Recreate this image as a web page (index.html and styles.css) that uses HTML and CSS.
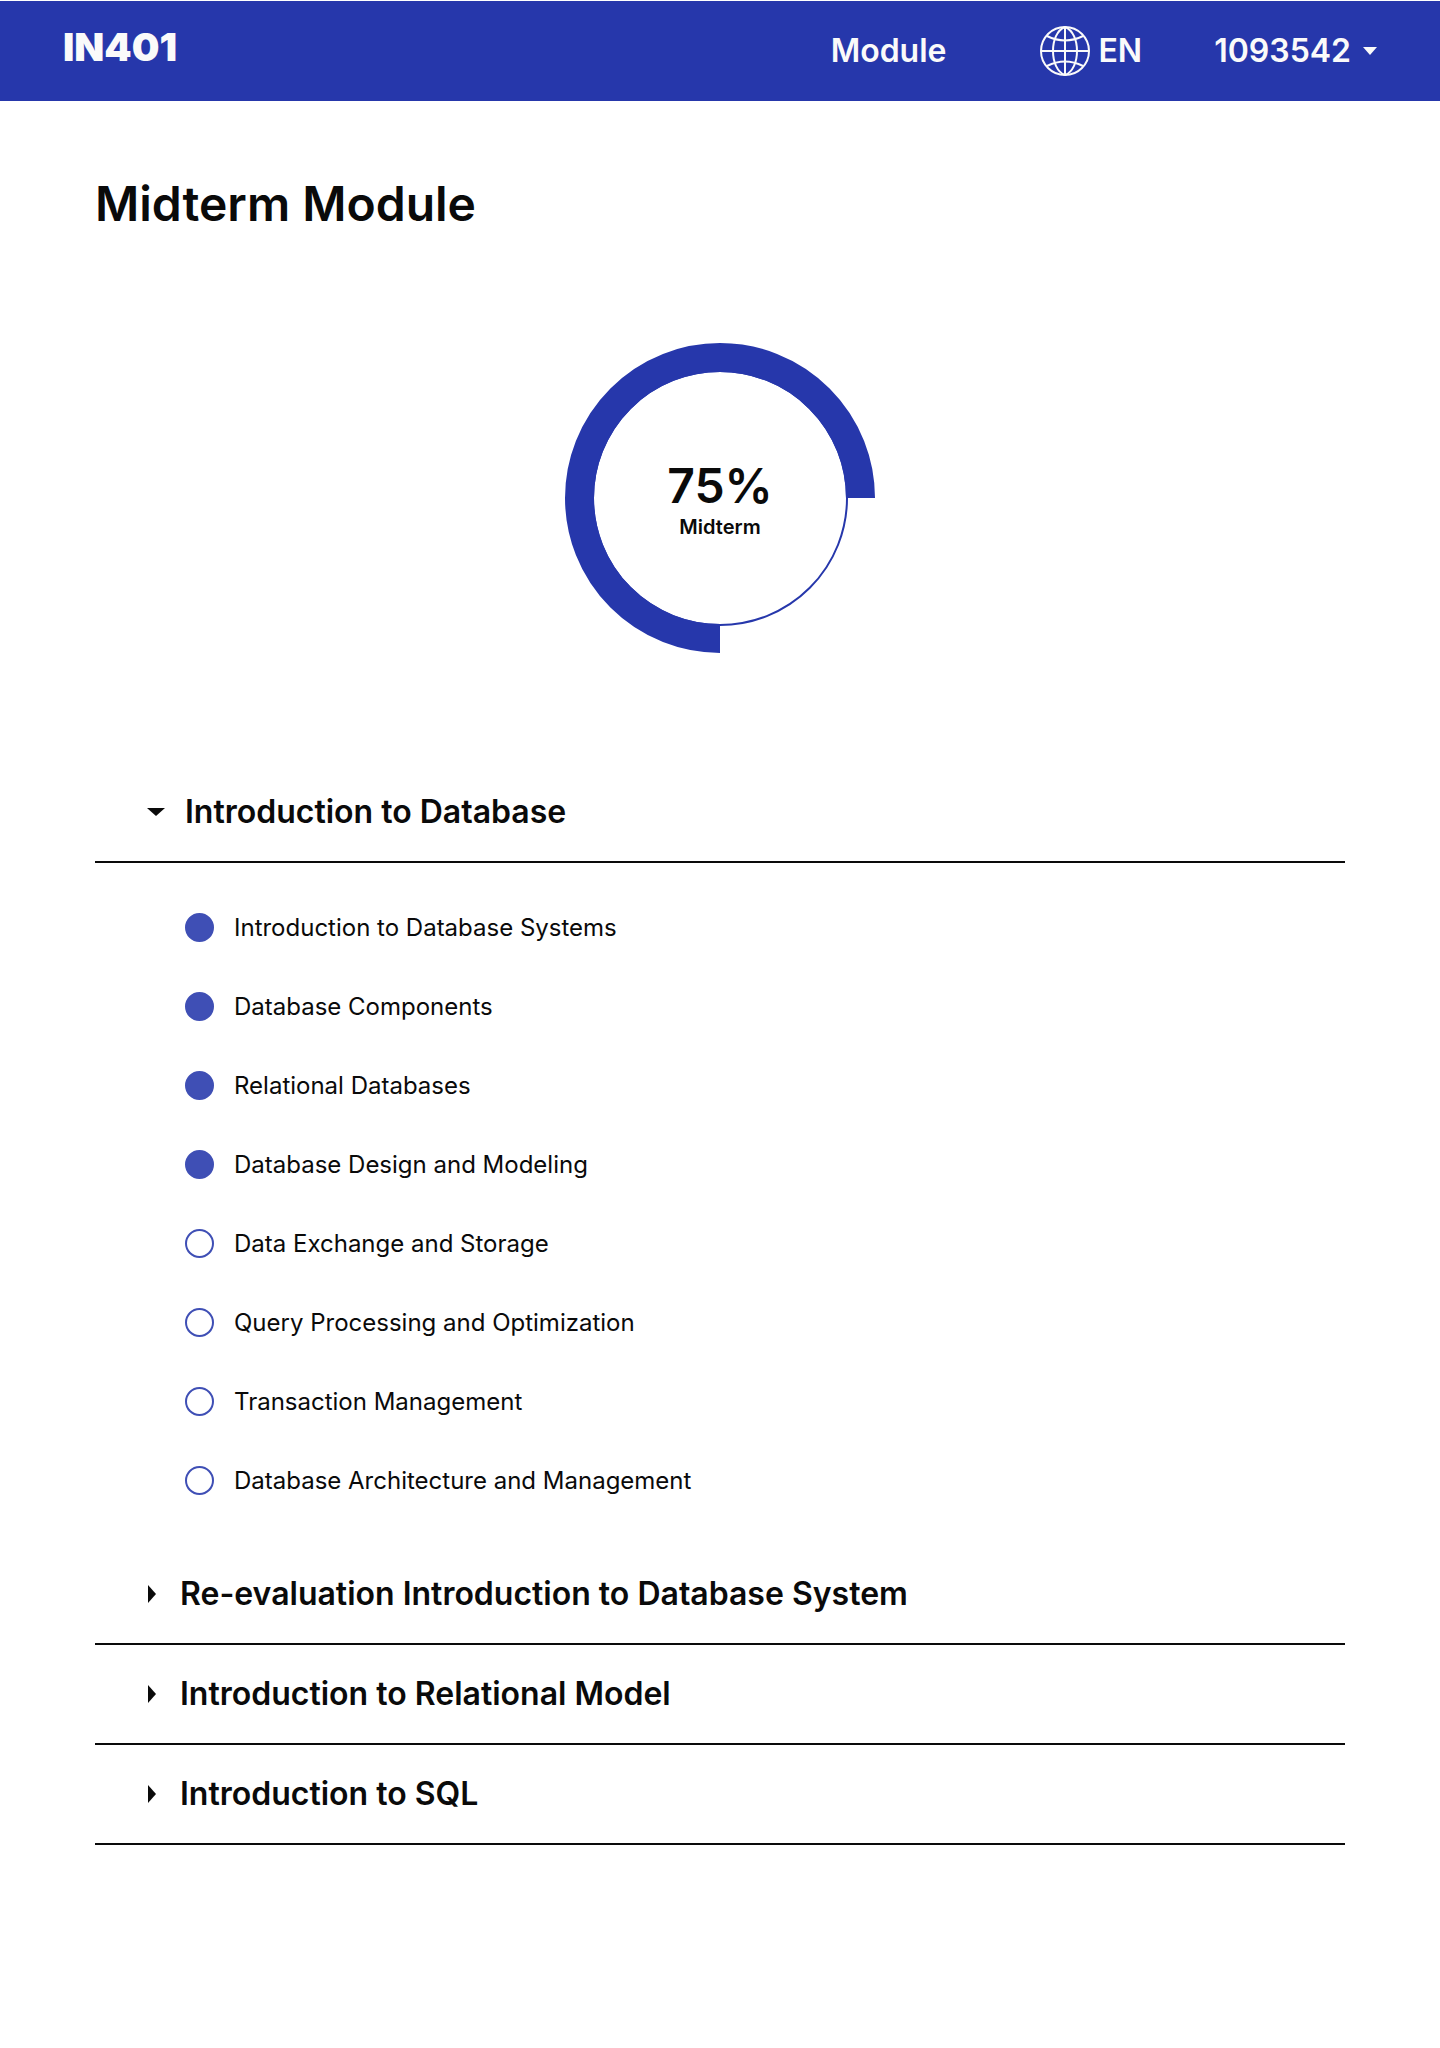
FILE: index.html
```html
<!DOCTYPE html>
<html lang="en">
<head>
<meta charset="utf-8">
<meta name="viewport" content="width=device-width, initial-scale=1">
<title>IN401 – Midterm Module</title>
<link rel="stylesheet" href="styles.css">
</head>
<body>
<header class="topbar">
  <a class="logo" href="#">IN401</a>
  <nav class="nav">
    <a class="nav-link" href="#">Module</a>
    <button class="lang" type="button">
      <svg class="globe" viewBox="0 0 50 50" aria-hidden="true">
        <circle cx="25" cy="25" r="24"/>
        <path d="M25 1v48M1 25h48"/>
        <path d="M25 1C9 7 9 43 25 49M25 1C41 7 41 43 25 49"/>
        <path d="M7 10Q25 19 43 10M7 40Q25 31 43 40"/>
      </svg>
      EN
    </button>
    <button class="account" type="button">
      1093542
      <svg class="account-caret" viewBox="0 0 14 8" aria-hidden="true"><path d="M0 0h14L7 8z"/></svg>
    </button>
  </nav>
</header>
<main class="page">
  <h1 class="title">Midterm Module</h1>
  <div class="progress">
    <svg class="ring" viewBox="0 0 620 620" aria-hidden="true">
      <circle class="ring-track" cx="310" cy="310" r="254"/>
      <path class="ring-value" d="M310 591A281 281 0 1 1 591 310"/>
    </svg>
    <p class="progress-text"><span class="percent">75%</span><span class="caption">Midterm</span></p>
  </div>
  <details class="section" open>
    <summary class="heading"><svg class="caret caret-open" viewBox="0 0 18 8" aria-hidden="true"><path d="M0 0h18L9 8z"/></svg>Introduction to Database</summary>
    <ul class="lessons">
      <li><label class="lesson"><input class="mark" type="checkbox" checked>Introduction to Database Systems</label></li>
      <li><label class="lesson"><input class="mark" type="checkbox" checked>Database Components</label></li>
      <li><label class="lesson"><input class="mark" type="checkbox" checked>Relational Databases</label></li>
      <li><label class="lesson"><input class="mark" type="checkbox" checked>Database Design and Modeling</label></li>
      <li><label class="lesson"><input class="mark" type="checkbox">Data Exchange and Storage</label></li>
      <li><label class="lesson"><input class="mark" type="checkbox">Query Processing and Optimization</label></li>
      <li><label class="lesson"><input class="mark" type="checkbox">Transaction Management</label></li>
      <li><label class="lesson"><input class="mark" type="checkbox">Database Architecture and Management</label></li>
    </ul>
  </details>
  <details class="section">
    <summary class="heading"><svg class="caret" viewBox="0 0 13 18" aria-hidden="true"><path d="M1 0l8 9-8 9z"/></svg>Re-evaluation Introduction to Database System</summary>
  </details>
  <details class="section">
    <summary class="heading"><svg class="caret" viewBox="0 0 13 18" aria-hidden="true"><path d="M1 0l8 9-8 9z"/></svg>Introduction to Relational Model</summary>
  </details>
  <details class="section">
    <summary class="heading"><svg class="caret" viewBox="0 0 13 18" aria-hidden="true"><path d="M1 0l8 9-8 9z"/></svg>Introduction to SQL</summary>
  </details>
</main>
</body>
</html>
```
FILE: styles.css
```css
* {
  box-sizing: border-box;
}

body {
  margin: 0;
  padding-top: 1px;
  background: #fff;
  color: #0a0a0a;
  font-family: Inter, "Liberation Sans", sans-serif;
}

button {
  padding: 0;
  border: 0;
  background: none;
  color: inherit;
  font: inherit;
  cursor: pointer;
}

a {
  color: inherit;
  text-decoration: none;
}

.topbar {
  display: flex;
  align-items: center;
  justify-content: space-between;
  min-height: 100px;
  padding: 0 63px;
  background: #2637ab;
  color: #fafafa;
}

.logo {
  padding-bottom: 8px;
  font-size: 39px;
  font-weight: 900;
  line-height: 48px;
}

.nav {
  display: flex;
  align-items: center;
  font-size: 32px;
  font-weight: 600;
  line-height: 42px;
}

.lang {
  display: flex;
  align-items: center;
  gap: 8px;
  margin: 0 72px 0 94px;
}

.globe {
  width: 50px;
  height: 50px;
  fill: none;
  stroke: currentColor;
  stroke-width: 2;
}

.account {
  display: flex;
  align-items: center;
  gap: 12px;
}

.account-caret {
  width: 14px;
  height: 8px;
  fill: currentColor;
}

.page {
  padding: 72px 95px 80px;
}

.title {
  margin: 0;
  font-size: 48px;
  font-weight: 600;
  line-height: 62px;
}

.progress {
  display: grid;
  place-items: center;
  margin: 108px 0 110px;
}

.ring,
.progress-text {
  grid-area: 1 / 1;
}

.ring {
  width: 310px;
  height: 310px;
  fill: none;
  stroke: #2637ab;
}

.ring-track {
  stroke-width: 4;
}

.ring-value {
  stroke-width: 58;
}

.progress-text {
  display: flex;
  flex-direction: column;
  align-items: center;
  margin: 0;
  padding-top: 2px;
  font-weight: 600;
}

.percent {
  font-size: 48px;
  line-height: 56px;
}

.caption {
  font-size: 20px;
  line-height: 26px;
}

.heading {
  display: flex;
  align-items: center;
  gap: 20px;
  min-height: 100px;
  padding-left: 52px;
  border-bottom: 2px solid #0a0a0a;
  font-size: 32px;
  font-weight: 600;
  line-height: 40px;
  list-style: none;
  cursor: pointer;
}

.caret {
  flex: none;
  width: 13px;
  height: 18px;
  fill: currentColor;
}

.caret-open {
  width: 18px;
  height: 8px;
}

.lessons {
  margin: 0;
  padding: 25px 0 25px 90px;
  list-style: none;
}

.lesson {
  display: flex;
  align-items: center;
  gap: 20px;
  min-height: 79px;
  font-size: 24px;
  line-height: 30px;
}

.mark {
  appearance: none;
  flex: none;
  width: 29px;
  height: 29px;
  margin: 0;
  border: 2px solid #3f4fb5;
  border-radius: 50%;
}

.mark:checked {
  background: #3f4fb5;
}
```
